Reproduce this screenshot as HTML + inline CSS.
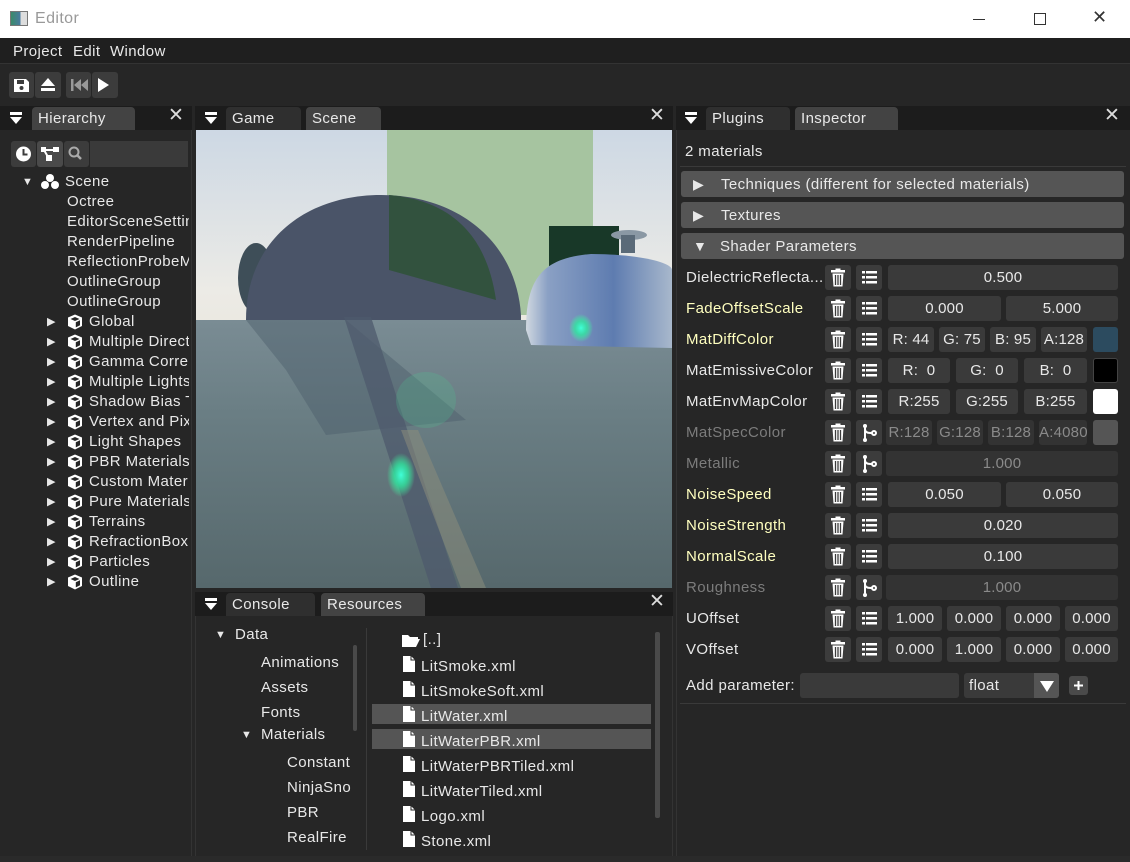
<!DOCTYPE html>
<html><head><meta charset="utf-8"><style>
*{box-sizing:border-box;margin:0;padding:0}
body{width:1130px;height:862px;background:#262626;font-family:"Liberation Sans",sans-serif;font-size:15px;letter-spacing:.4px;color:#e8e8e8;position:relative;overflow:hidden}
.a{position:absolute}
.t{position:absolute;white-space:nowrap;line-height:20px}
.btn{position:absolute;background:#3c3c3c;border-radius:3px}
.hdr{position:absolute;background:#1c1c1c;height:24px}
.tab{position:absolute;top:1px;height:23px;border-radius:4px 4px 0 0;background:#2f2f2f;padding:2px 0 0 6px;line-height:20px}
.tab.on{background:#434343}
.f{position:absolute;height:25px;background:#3a3a3a;border-radius:3px;text-align:center;line-height:25px;color:#e8e8e8;letter-spacing:.2px}
.dim .f{color:#8a8a8a;background:#333}
.lbl{position:absolute;left:686px;line-height:25px}
.y{color:#ffffbf}.g{color:#7c7c7c}
</style></head><body>
<svg width="0" height="0" style="position:absolute"><defs>
<symbol id="cube" viewBox="0 0 18 18"><path d="M9 1.5 L16 4.5 V13 L9 16.5 L2 13 V4.5 Z" fill="#fff"/><path d="M4.5 6 L9 8 L13.5 6 L9 4 Z M9.8 9.3 L14 7.3 V12.3 L9.8 14.4 Z" fill="#262626"/></symbol>
<symbol id="trash" viewBox="0 0 26 25"><rect x="6" y="5" width="14" height="2.5" fill="#fff"/><rect x="10.5" y="3.5" width="5" height="2" fill="#fff"/><path d="M7.5 8.5h11l-1 13h-9z" fill="#fff"/><path d="M10.5 10v10M13 10v10M15.5 10v10" stroke="#3c3c3c" stroke-width="1.3"/></symbol>
<symbol id="list" viewBox="0 0 26 25"><g fill="#fff"><rect x="6" y="6" width="3" height="2.5"/><rect x="10" y="6" width="11" height="2.5"/><rect x="6" y="11" width="3" height="2.5"/><rect x="10" y="11" width="11" height="2.5"/><rect x="6" y="16" width="3" height="2.5"/><rect x="10" y="16" width="11" height="2.5"/></g></symbol>
<symbol id="br" viewBox="0 0 26 25"><g stroke="#fff" stroke-width="2" fill="none"><path d="M9 5v15"/><path d="M9 9c0 4 4 4 7 4"/><circle cx="18" cy="13" r="2"/></g><circle cx="9" cy="6" r="2" fill="#fff"/><circle cx="9" cy="20" r="2" fill="#fff"/></symbol>
<symbol id="file" viewBox="0 0 14 18"><path d="M1 1h8l4 4v12H1z" fill="#fff"/><path d="M9 1v4h4" fill="none" stroke="#262626" stroke-width="1"/></symbol>
<symbol id="dd" viewBox="0 0 14 12"><rect x="1" y="0" width="12" height="3" fill="#fff"/><path d="M1 5h12l-6 7z" fill="#fff"/></symbol>
</defs></svg>

<!-- title bar -->
<div class="a" style="left:0;top:0;width:1130px;height:38px;background:#fff"></div>
<div class="a" style="left:10px;top:11px;width:18px;height:15px;border:1px solid #777;background:linear-gradient(90deg,#3a8a6a,#4a7aa0 60%,#ddd 60%)"></div>
<div class="t" style="left:35px;top:9px;color:#999;font-size:16px">Editor</div>
<div class="a" style="left:973px;top:19px;width:12px;height:1px;background:#333"></div>
<div class="a" style="left:1034px;top:13px;width:12px;height:12px;border:1px solid #333"></div>
<div class="t" style="left:1092px;top:7px;color:#333;font-size:18px">✕</div>
<!-- menu -->
<div class="a" style="left:0;top:38px;width:1130px;height:26px;background:#1f1f1f;border-bottom:1px solid #333"></div>
<div class="t" style="left:13px;top:42px">Project</div>
<div class="t" style="left:73px;top:42px">Edit</div>
<div class="t" style="left:110px;top:42px">Window</div>
<!-- toolbar -->
<div class="a" style="left:0;top:64px;width:1130px;height:42px;background:#262626"></div>
<div class="btn" style="left:9px;top:72px;width:25px;height:26px"></div>
<div class="btn" style="left:35px;top:72px;width:26px;height:26px"></div>
<div class="btn" style="left:66px;top:72px;width:25px;height:26px"></div>
<div class="btn" style="left:92px;top:72px;width:26px;height:26px"></div>
<svg class="a" style="left:9px;top:72px" width="110" height="26"><path d="M5 7h12l3 3v10H5z" fill="#fff"/><rect x="8" y="8" width="7" height="4" fill="#3c3c3c"/><circle cx="12.5" cy="16" r="2" fill="#3c3c3c"/>
<path d="M39 6l7 8H32z M32 16h14v3H32z" fill="#fff"/>
<path d="M62 7h2.5v12H62z M72 7l-7 6 7 6z M79 7l-7 6 7 6z" fill="#999"/>
<path d="M89 6l11 7-11 7z" fill="#fff"/></svg>

<!-- hierarchy -->
<div class="hdr" style="left:0;top:106px;width:192px"></div>
<svg class="a" style="left:9px;top:112px" width="14" height="12"><use href="#dd"/></svg>
<div class="tab on" style="left:32px;top:107px;width:103px">Hierarchy</div>
<div class="t" style="left:168px;top:106px;font-size:19px;color:#ddd">✕</div>
<div class="a" style="left:0;top:130px;width:192px;height:732px;background:#262626;border-right:1px solid #333"></div>
<div class="btn" style="left:11px;top:141px;width:25px;height:26px"></div>
<div class="btn" style="left:37px;top:141px;width:26px;height:26px;background:#4a4a4a"></div>
<div class="btn" style="left:64px;top:141px;width:25px;height:26px"></div>
<div class="a" style="left:90px;top:141px;width:98px;height:26px;background:#3a3a3a"></div>
<svg class="a" style="left:11px;top:141px" width="80" height="26"><circle cx="12.5" cy="13" r="7.5" fill="#fff"/><path d="M12.5 8v5.5h4" stroke="#3c3c3c" stroke-width="2" fill="none"/>
<rect x="30" y="6" width="5" height="5" fill="#fff"/><rect x="42" y="6" width="6" height="5" fill="#fff"/><rect x="35" y="14" width="6" height="6" fill="#fff"/><path d="M33 9h10M33 9l4 7" stroke="#fff" stroke-width="2"/>
<circle cx="63" cy="11" r="4.5" stroke="#aaa" stroke-width="2" fill="none"/><path d="M66 14l4 4" stroke="#aaa" stroke-width="2.5"/></svg>
<div class="t" style="left:22px;top:172px;font-size:11px">▼</div>
<svg class="a" style="left:40px;top:173px" width="20" height="18"><circle cx="10" cy="5" r="4" fill="#fff"/><circle cx="5" cy="12" r="4" fill="#fff"/><circle cx="15" cy="12" r="4" fill="#fff"/></svg>
<div class="t" style="left:65px;top:172px">Scene</div>
<div class="a" style="left:67px;top:192px;width:122px;height:120px;overflow:hidden"><div class="t" style="left:0;top:0">Octree<br>EditorSceneSettings<br>RenderPipeline<br>ReflectionProbeManager<br>OutlineGroup<br>OutlineGroup</div></div>
<div class="a" style="left:0;top:312px;width:189px;height:280px;overflow:hidden">
<div class="t" style="left:47px;top:0;font-size:11px;line-height:20px">▶<br>▶<br>▶<br>▶<br>▶<br>▶<br>▶<br>▶<br>▶<br>▶<br>▶<br>▶<br>▶<br>▶</div>
<svg class="a" style="left:66px;top:1px" width="20" height="280"><use href="#cube" y="0" width="18" height="18"/><use href="#cube" y="20" width="18" height="18"/><use href="#cube" y="40" width="18" height="18"/><use href="#cube" y="60" width="18" height="18"/><use href="#cube" y="80" width="18" height="18"/><use href="#cube" y="100" width="18" height="18"/><use href="#cube" y="120" width="18" height="18"/><use href="#cube" y="140" width="18" height="18"/><use href="#cube" y="160" width="18" height="18"/><use href="#cube" y="180" width="18" height="18"/><use href="#cube" y="200" width="18" height="18"/><use href="#cube" y="220" width="18" height="18"/><use href="#cube" y="240" width="18" height="18"/><use href="#cube" y="260" width="18" height="18"/></svg>
<div class="t" style="left:89px;top:0">Global<br>Multiple Directional<br>Gamma Correction<br>Multiple Lights<br>Shadow Bias Test<br>Vertex and Pixel<br>Light Shapes<br>PBR Materials<br>Custom Materials<br>Pure Materials<br>Terrains<br>RefractionBox<br>Particles<br>Outline</div>
</div>

<!-- game / scene -->
<div class="hdr" style="left:195px;top:106px;width:478px"></div>
<svg class="a" style="left:204px;top:112px" width="14" height="12"><use href="#dd"/></svg>
<div class="tab" style="left:226px;top:107px;width:75px">Game</div>
<div class="tab on" style="left:306px;top:107px;width:75px">Scene</div>
<div class="t" style="left:649px;top:106px;font-size:19px;color:#ddd">✕</div>
<svg class="a" style="left:196px;top:130px" width="476" height="458" viewBox="0 0 476 458">
<defs><linearGradient id="sky" x1="0" y1="0" x2="0" y2="1"><stop offset="0" stop-color="#cdd8e4"/><stop offset=".35" stop-color="#ecebe6"/><stop offset="1" stop-color="#e0d4bc"/></linearGradient>
<linearGradient id="fl" x1="0" y1="0" x2="0" y2="1"><stop offset="0" stop-color="#7a8c94"/><stop offset=".35" stop-color="#6a7e84"/><stop offset="1" stop-color="#56686c"/></linearGradient>
<linearGradient id="tp" x1="0" y1="0" x2="1" y2="0"><stop offset="0" stop-color="#d0d8e0"/><stop offset=".15" stop-color="#8aa0c4"/><stop offset=".6" stop-color="#5e7cb0"/><stop offset="1" stop-color="#a8b8cc"/></linearGradient>
<radialGradient id="gl"><stop offset="0" stop-color="#40ffd8"/><stop offset=".5" stop-color="#30e8a0" stop-opacity=".8"/><stop offset="1" stop-color="#40ffa0" stop-opacity="0"/></radialGradient></defs>
<rect width="476" height="458" fill="url(#sky)"/>
<rect x="191" y="0" width="206" height="185" fill="#a6c4a0"/>
<rect x="0" y="190" width="476" height="268" fill="url(#fl)"/>
<ellipse cx="60" cy="148" rx="18" ry="35" fill="#3e4e58"/>
<path d="M50 190 C50 110 110 65 185 65 C260 65 320 110 325 185 L325 190Z" fill="#4a5468"/>
<path d="M193 65 C250 70 290 100 300 170 L193 140Z" fill="#32523e"/>
<rect x="353" y="96" width="70" height="40" fill="#183828"/>
<path d="M330 200 C330 150 345 128 395 124 C440 124 476 132 476 140 L476 218 L335 215Z" fill="url(#tp)"/>
<ellipse cx="433" cy="105" rx="18" ry="5" fill="#8a98a4"/><rect x="425" y="105" width="14" height="18" fill="#5a6a78"/>
<path d="M50 190 L150 190 L270 290 L130 305 L90 240Z" fill="#4c5e6a" opacity=".45"/>
<path d="M148 187 L175 187 L262 458 L235 458Z" fill="#4e5a6c" opacity=".75"/>
<path d="M205 300 L222 300 L290 458 L265 458Z" fill="#8a8c7c" opacity=".55"/>
<ellipse cx="230" cy="270" rx="30" ry="28" fill="#50c090" opacity=".25"/>
<ellipse cx="205" cy="345" rx="14" ry="22" fill="url(#gl)"/>
<ellipse cx="385" cy="198" rx="12" ry="14" fill="url(#gl)"/>
</svg>

<!-- console / resources -->
<div class="hdr" style="left:195px;top:592px;width:478px"></div>
<svg class="a" style="left:204px;top:598px" width="14" height="12"><use href="#dd"/></svg>
<div class="tab" style="left:226px;top:593px;width:89px">Console</div>
<div class="tab on" style="left:321px;top:593px;width:104px">Resources</div>
<div class="t" style="left:649px;top:592px;font-size:19px;color:#ddd">✕</div>
<div class="a" style="left:195px;top:616px;width:478px;height:240px;background:#262626;border-left:1px solid #333;border-right:1px solid #333"></div>
<div class="t" style="left:215px;top:625px;font-size:11px">▼</div>
<div class="t" style="left:235px;top:625px">Data</div>
<div class="t" style="left:261px;top:650px;line-height:25px">Animations<br>Assets<br>Fonts</div>
<div class="t" style="left:241px;top:725px;font-size:11px">▼</div>
<div class="t" style="left:261px;top:725px">Materials</div>
<div class="a" style="left:287px;top:750px;width:64px;height:100px;overflow:hidden"><div class="t" style="left:0;top:0;line-height:25px">Constant<br>NinjaSnow<br>PBR<br>RealFire</div></div>
<div class="a" style="left:353px;top:645px;width:4px;height:86px;background:#4a4a4a;border-radius:2px"></div>
<div class="a" style="left:366px;top:628px;width:1px;height:222px;background:#3a3a3a"></div>
<div class="a" style="left:655px;top:632px;width:5px;height:186px;background:#4a4a4a;border-radius:2px"></div>
<div class="a" style="left:372px;top:704px;width:279px;height:20px;background:#555"></div>
<div class="a" style="left:372px;top:729px;width:279px;height:20px;background:#555"></div>
<svg class="a" style="left:401px;top:630px" width="20" height="20"><path d="M1 5h6l2 2h8v2H5l-4 8z M5 9h14l-4 8H1z" fill="#fff"/></svg>
<div class="t" style="left:423px;top:630px">[..]</div>
<svg class="a" style="left:402px;top:655px" width="14" height="200"><use href="#file" y="0" width="14" height="18"/><use href="#file" y="25" width="14" height="18"/><use href="#file" y="50" width="14" height="18"/><use href="#file" y="75" width="14" height="18"/><use href="#file" y="100" width="14" height="18"/><use href="#file" y="125" width="14" height="18"/><use href="#file" y="150" width="14" height="18"/><use href="#file" y="175" width="14" height="18"/></svg>
<div class="t" style="left:421px;top:654px;line-height:25px">LitSmoke.xml<br>LitSmokeSoft.xml<br>LitWater.xml<br>LitWaterPBR.xml<br>LitWaterPBRTiled.xml<br>LitWaterTiled.xml<br>Logo.xml<br>Stone.xml</div>
<div class="a" style="left:0;top:856px;width:1130px;height:6px;background:#2a2a2a"></div>

<!-- inspector -->
<div class="hdr" style="left:676px;top:106px;width:454px"></div>
<svg class="a" style="left:684px;top:112px" width="14" height="12"><use href="#dd"/></svg>
<div class="tab" style="left:706px;top:107px;width:84px">Plugins</div>
<div class="tab on" style="left:795px;top:107px;width:103px">Inspector</div>
<div class="t" style="left:1104px;top:106px;font-size:19px;color:#ddd">✕</div>
<div class="a" style="left:676px;top:130px;width:454px;height:726px;background:#262626;border-left:1px solid #333"></div>
<div class="t" style="left:685px;top:142px">2 materials</div>
<div class="a" style="left:680px;top:166px;width:446px;height:1px;background:#3a3a3a"></div>
<div class="a" style="left:681px;top:171px;width:443px;height:26px;background:#555;border-radius:3px"></div>
<div class="a" style="left:681px;top:202px;width:443px;height:26px;background:#555;border-radius:3px"></div>
<div class="a" style="left:681px;top:233px;width:443px;height:26px;background:#555;border-radius:3px"></div>
<div class="t" style="left:693px;top:174px;font-size:14px">▶</div>
<div class="t" style="left:693px;top:205px;font-size:14px">▶</div>
<div class="t" style="left:693px;top:236px;font-size:14px">▼</div>
<div class="t" style="left:721px;top:175px">Techniques (different for selected materials)</div>
<div class="t" style="left:721px;top:206px">Textures</div>
<div class="t" style="left:720px;top:237px">Shader Parameters</div>

<svg class="a" style="left:825px;top:265px" width="57" height="400">
<g fill="#3c3c3c"><rect x="0" y="0" width="26" height="25" rx="3"/><rect x="31" y="0" width="26" height="25" rx="3"/>
<rect x="0" y="31" width="26" height="25" rx="3"/><rect x="31" y="31" width="26" height="25" rx="3"/>
<rect x="0" y="62" width="26" height="25" rx="3"/><rect x="31" y="62" width="26" height="25" rx="3"/>
<rect x="0" y="93" width="26" height="25" rx="3"/><rect x="31" y="93" width="26" height="25" rx="3"/>
<rect x="0" y="124" width="26" height="25" rx="3"/><rect x="31" y="124" width="26" height="25" rx="3"/>
<rect x="0" y="155" width="26" height="25" rx="3"/><rect x="31" y="155" width="26" height="25" rx="3"/>
<rect x="0" y="186" width="26" height="25" rx="3"/><rect x="31" y="186" width="26" height="25" rx="3"/>
<rect x="0" y="217" width="26" height="25" rx="3"/><rect x="31" y="217" width="26" height="25" rx="3"/>
<rect x="0" y="248" width="26" height="25" rx="3"/><rect x="31" y="248" width="26" height="25" rx="3"/>
<rect x="0" y="279" width="26" height="25" rx="3"/><rect x="31" y="279" width="26" height="25" rx="3"/>
<rect x="0" y="310" width="26" height="25" rx="3"/><rect x="31" y="310" width="26" height="25" rx="3"/>
<rect x="0" y="341" width="26" height="25" rx="3"/><rect x="31" y="341" width="26" height="25" rx="3"/>
<rect x="0" y="372" width="26" height="25" rx="3"/><rect x="31" y="372" width="26" height="25" rx="3"/></g>
<use href="#trash" y="0" width="26" height="25"/><use href="#list" x="31" y="0" width="26" height="25"/>
<use href="#trash" y="31" width="26" height="25"/><use href="#list" x="31" y="31" width="26" height="25"/>
<use href="#trash" y="62" width="26" height="25"/><use href="#list" x="31" y="62" width="26" height="25"/>
<use href="#trash" y="93" width="26" height="25"/><use href="#list" x="31" y="93" width="26" height="25"/>
<use href="#trash" y="124" width="26" height="25"/><use href="#list" x="31" y="124" width="26" height="25"/>
<use href="#trash" y="155" width="26" height="25"/><use href="#br" x="31" y="155" width="26" height="25"/>
<use href="#trash" y="186" width="26" height="25"/><use href="#br" x="31" y="186" width="26" height="25"/>
<use href="#trash" y="217" width="26" height="25"/><use href="#list" x="31" y="217" width="26" height="25"/>
<use href="#trash" y="248" width="26" height="25"/><use href="#list" x="31" y="248" width="26" height="25"/>
<use href="#trash" y="279" width="26" height="25"/><use href="#list" x="31" y="279" width="26" height="25"/>
<use href="#trash" y="310" width="26" height="25"/><use href="#br" x="31" y="310" width="26" height="25"/>
<use href="#trash" y="341" width="26" height="25"/><use href="#list" x="31" y="341" width="26" height="25"/>
<use href="#trash" y="372" width="26" height="25"/><use href="#list" x="31" y="372" width="26" height="25"/>
</svg>

<div class="lbl" style="top:265px">DielectricReflecta...</div>
<div class="f" style="left:888px;top:265px;width:230px">0.500</div>

<div class="lbl y" style="top:296px">FadeOffsetScale</div>
<div class="f" style="left:888px;top:296px;width:113px">0.000</div>
<div class="f" style="left:1006px;top:296px;width:112px">5.000</div>

<div class="lbl y" style="top:327px">MatDiffColor</div>
<div class="f" style="left:888px;top:327px;width:46px">R: 44</div>
<div class="f" style="left:939px;top:327px;width:46px">G: 75</div>
<div class="f" style="left:990px;top:327px;width:46px">B: 95</div>
<div class="f" style="left:1041px;top:327px;width:46px">A:128</div>
<div class="a" style="left:1093px;top:327px;width:25px;height:25px;background:#2c4b5f;border-radius:3px"></div>

<div class="lbl" style="top:358px">MatEmissiveColor</div>
<div class="f" style="left:888px;top:358px;width:62px">R:&nbsp; 0</div>
<div class="f" style="left:956px;top:358px;width:62px">G:&nbsp; 0</div>
<div class="f" style="left:1024px;top:358px;width:63px">B:&nbsp; 0</div>
<div class="a" style="left:1093px;top:358px;width:25px;height:25px;background:#000;border:1px solid #444;border-radius:3px"></div>

<div class="lbl" style="top:389px">MatEnvMapColor</div>
<div class="f" style="left:888px;top:389px;width:62px">R:255</div>
<div class="f" style="left:956px;top:389px;width:62px">G:255</div>
<div class="f" style="left:1024px;top:389px;width:63px">B:255</div>
<div class="a" style="left:1093px;top:389px;width:25px;height:25px;background:#fff;border-radius:3px"></div>

<div class="dim">
<div class="lbl g" style="top:420px">MatSpecColor</div>
<div class="f" style="left:886px;top:420px;width:46px">R:128</div>
<div class="f" style="left:937px;top:420px;width:46px">G:128</div>
<div class="f" style="left:988px;top:420px;width:46px">B:128</div>
<div class="f" style="left:1039px;top:420px;width:48px">A:4080</div>
<div class="a" style="left:1093px;top:420px;width:25px;height:25px;background:#555;border-radius:3px"></div>
<div class="lbl g" style="top:451px">Metallic</div>
<div class="f" style="left:886px;top:451px;width:232px">1.000</div>
</div>

<div class="lbl y" style="top:482px">NoiseSpeed</div>
<div class="f" style="left:888px;top:482px;width:113px">0.050</div>
<div class="f" style="left:1006px;top:482px;width:112px">0.050</div>

<div class="lbl y" style="top:513px">NoiseStrength</div>
<div class="f" style="left:888px;top:513px;width:230px">0.020</div>

<div class="lbl y" style="top:544px">NormalScale</div>
<div class="f" style="left:888px;top:544px;width:230px">0.100</div>

<div class="dim">
<div class="lbl g" style="top:575px">Roughness</div>
<div class="f" style="left:886px;top:575px;width:232px">1.000</div>
</div>

<div class="lbl" style="top:606px">UOffset</div>
<div class="f" style="left:888px;top:606px;width:54px">1.000</div>
<div class="f" style="left:947px;top:606px;width:54px">0.000</div>
<div class="f" style="left:1006px;top:606px;width:54px">0.000</div>
<div class="f" style="left:1065px;top:606px;width:53px">0.000</div>

<div class="lbl" style="top:637px">VOffset</div>
<div class="f" style="left:888px;top:637px;width:54px">0.000</div>
<div class="f" style="left:947px;top:637px;width:54px">1.000</div>
<div class="f" style="left:1006px;top:637px;width:54px">0.000</div>
<div class="f" style="left:1065px;top:637px;width:53px">0.000</div>

<div class="lbl" style="top:673px">Add parameter:</div>
<div class="a" style="left:800px;top:673px;width:159px;height:25px;background:#3a3a3a;border-radius:3px"></div>
<div class="a" style="left:964px;top:673px;width:95px;height:25px;background:#3a3a3a;border-radius:3px"></div>
<div class="t" style="left:969px;top:676px">float</div>
<div class="a" style="left:1034px;top:673px;width:25px;height:25px;background:#555;border-radius:0 3px 3px 0"></div>
<svg class="a" style="left:1038px;top:678px" width="18" height="16"><path d="M2 3h14l-7 11z" fill="#fff"/></svg>
<div class="a" style="left:1069px;top:676px;width:19px;height:19px;background:#4a4a4a;border-radius:3px"></div>
<svg class="a" style="left:1069px;top:676px" width="19" height="19"><path d="M9.5 5v9M5 9.5h9" stroke="#fff" stroke-width="2"/></svg>
<div class="a" style="left:680px;top:703px;width:446px;height:1px;background:#3a3a3a"></div>
</body></html>
